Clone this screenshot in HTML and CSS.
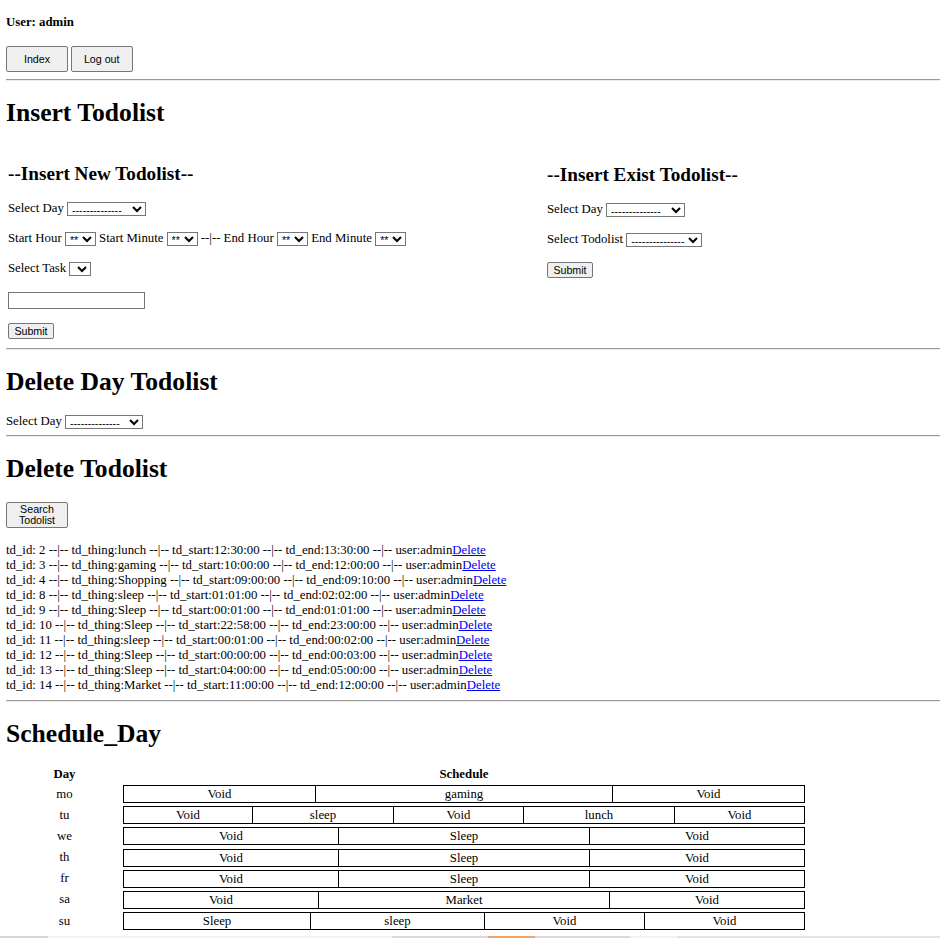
FILE: index.html
```html
<!DOCTYPE html>
<html>
<head>
<meta charset="utf-8">
<title>Todolist</title>
<link rel="stylesheet" href="styles.css">
</head>
<body>
<p class="user">User: admin</p>
<div class="nav"><button class="btn">Index</button> <button class="btn">Log out</button></div>
<hr class="rule rule-1">
<h1 class="title">Insert Todolist</h1>
<div class="cols">
  <form class="col">
    <h2 class="sub">--Insert New Todolist--</h2>
    <div class="row">Select Day <select class="sel sel-day"><option>--------------</option></select></div>
    <div class="row">Start Hour <select class="sel sel-sm"><option>**</option></select> Start Minute <select class="sel sel-sm"><option>**</option></select> --|-- End Hour <select class="sel sel-sm"><option>**</option></select> End Minute <select class="sel sel-sm"><option>**</option></select></div>
    <div class="row">Select Task <select class="sel sel-empty"></select></div>
    <div class="row row-input"><input class="txt" type="text"></div>
    <div class="row"><button class="sbtn" type="button">Submit</button></div>
  </form>
  <form class="col col-right">
    <h2 class="sub">--Insert Exist Todolist--</h2>
    <div class="row">Select Day <select class="sel sel-day"><option>--------------</option></select></div>
    <div class="row">Select Todolist <select class="sel sel-todo"><option>---------------</option></select></div>
    <div class="row"><button class="sbtn" type="button">Submit</button></div>
  </form>
</div>
<hr class="rule rule-2">
<h1 class="title">Delete Day Todolist</h1>
<div class="row row-del">Select Day <select class="sel sel-delday"><option>--------------</option></select></div>
<hr class="rule rule-3">
<h1 class="title">Delete Todolist</h1>
<button class="btn btn-search">Search<br>Todolist</button>
<div class="list">
  <div>td_id: 2 --|-- td_thing:lunch --|-- td_start:12:30:00 --|-- td_end:13:30:00 --|-- user:admin<a href="#">Delete</a></div>
  <div>td_id: 3 --|-- td_thing:gaming --|-- td_start:10:00:00 --|-- td_end:12:00:00 --|-- user:admin<a href="#">Delete</a></div>
  <div>td_id: 4 --|-- td_thing:Shopping --|-- td_start:09:00:00 --|-- td_end:09:10:00 --|-- user:admin<a href="#">Delete</a></div>
  <div>td_id: 8 --|-- td_thing:sleep --|-- td_start:01:01:00 --|-- td_end:02:02:00 --|-- user:admin<a href="#">Delete</a></div>
  <div>td_id: 9 --|-- td_thing:Sleep --|-- td_start:00:01:00 --|-- td_end:01:01:00 --|-- user:admin<a href="#">Delete</a></div>
  <div>td_id: 10 --|-- td_thing:Sleep --|-- td_start:22:58:00 --|-- td_end:23:00:00 --|-- user:admin<a href="#">Delete</a></div>
  <div>td_id: 11 --|-- td_thing:sleep --|-- td_start:00:01:00 --|-- td_end:00:02:00 --|-- user:admin<a href="#">Delete</a></div>
  <div>td_id: 12 --|-- td_thing:Sleep --|-- td_start:00:00:00 --|-- td_end:00:03:00 --|-- user:admin<a href="#">Delete</a></div>
  <div>td_id: 13 --|-- td_thing:Sleep --|-- td_start:04:00:00 --|-- td_end:05:00:00 --|-- user:admin<a href="#">Delete</a></div>
  <div>td_id: 14 --|-- td_thing:Market --|-- td_start:11:00:00 --|-- td_end:12:00:00 --|-- user:admin<a href="#">Delete</a></div>
</div>
<hr class="rule rule-4">
<h1 class="title">Schedule_Day</h1>
<table class="sched">
  <thead>
    <tr><th class="day">Day</th><th class="sch">Schedule</th></tr>
  </thead>
  <tbody>
    <tr><td class="day">mo</td><td class="sch"><div class="bar"><span class="seg" style="width:191px">Void</span><span class="seg" style="width:297px">gaming</span><span class="seg" style="width:192px">Void</span></div></td></tr>
    <tr><td class="day">tu</td><td class="sch"><div class="bar"><span class="seg" style="width:128px">Void</span><span class="seg" style="width:141px">sleep</span><span class="seg" style="width:130px">Void</span><span class="seg" style="width:151px">lunch</span><span class="seg" style="width:130px">Void</span></div></td></tr>
    <tr><td class="day">we</td><td class="sch"><div class="bar"><span class="seg" style="width:214px">Void</span><span class="seg" style="width:251px">Sleep</span><span class="seg" style="width:215px">Void</span></div></td></tr>
    <tr><td class="day">th</td><td class="sch"><div class="bar"><span class="seg" style="width:214px">Void</span><span class="seg" style="width:251px">Sleep</span><span class="seg" style="width:215px">Void</span></div></td></tr>
    <tr><td class="day">fr</td><td class="sch"><div class="bar"><span class="seg" style="width:214px">Void</span><span class="seg" style="width:251px">Sleep</span><span class="seg" style="width:215px">Void</span></div></td></tr>
    <tr><td class="day">sa</td><td class="sch"><div class="bar"><span class="seg" style="width:194px">Void</span><span class="seg" style="width:291px">Market</span><span class="seg" style="width:195px">Void</span></div></td></tr>
    <tr><td class="day">su</td><td class="sch"><div class="bar"><span class="seg" style="width:186px">Sleep</span><span class="seg" style="width:174px">sleep</span><span class="seg" style="width:160px">Void</span><span class="seg" style="width:160px">Void</span></div></td></tr>
  </tbody>
</table>
<div class="strip">
  <span class="s s1"></span><span class="s s2"></span><span class="s s3"></span><span class="s s4"></span><span class="s s5"></span><span class="s s6"></span><span class="s s7"></span>
</div>
</body>
</html>
```

FILE: styles.css
```css
html, body {
  background: #fff;
}
body {
  margin: 0;
  padding: 0 6px;
  font-family: "Liberation Serif", "Times New Roman", serif;
  font-size: 12.8px;
  color: #000;
}

.user {
  margin: 15px 0 0;
  font-weight: bold;
  line-height: 15px;
}

.nav {
  margin-top: 16px;
  height: 26px;
  font-size: 10.67px;
}

.btn {
  font-family: "Liberation Sans", Arial, sans-serif;
  font-size: 10.67px;
  line-height: 12px;
  width: 62px;
  height: 26px;
  padding: 0;
  background: #efefef;
  color: #000;
  border: 1px solid #767676;
  border-radius: 2px;
  vertical-align: top;
}

.rule {
  height: 0;
  border: 0;
  border-top: 1px solid #9a9a9a;
  border-bottom: 1px solid #ececec;
  margin: 0 -6px 0 0;
}
.rule-1 { margin-top: 7px; }
.rule-2 { margin-top: 9px; }
.rule-3 { margin-top: 5px; }
.rule-4 { margin-top: 7px; }

.title {
  margin: 17px 0 0;
  font-size: 25.6px;
  line-height: 30px;
  font-weight: bold;
}

.cols {
  display: grid;
  grid-template-columns: 539px 1fr;
  padding-left: 2px;
  margin-top: 35px;
}
.col {
  display: flex;
  flex-direction: column;
  gap: 13px;
  margin: 0;
}
.col-right {
  padding-top: 1px;
}
.sub {
  margin: 0 0 2px;
  font-size: 19.2px;
  line-height: 22px;
  font-weight: bold;
}

.row {
  height: 17px;
  line-height: 17px;
  white-space: nowrap;
}
.row-input {
  height: 19px;
  line-height: 19px;
}
.row-del {
  margin-top: 16px;
}

.sel {
  font-family: "Liberation Sans", Arial, sans-serif;
  font-size: 10.67px;
  height: 14px;
  padding: 0;
  margin: 0;
  border: 1px solid #767676;
  border-radius: 0;
  background: #fff;
  color: #000;
  vertical-align: middle;
  box-sizing: border-box;
}
.sel-day { width: 79px; }
.sel-delday { width: 78px; }
.sel-todo { width: 76px; }
.sel-sm { width: 31px; }
.sel-empty { width: 22px; }

.txt {
  width: 137px;
  height: 17px;
  box-sizing: border-box;
  border: 1px solid #767676;
  padding: 0 2px;
  margin: 0;
  vertical-align: middle;
  font-size: 10.67px;
}

.sbtn {
  font-family: "Liberation Sans", Arial, sans-serif;
  font-size: 10.67px;
  width: 46px;
  height: 16px;
  padding: 0;
  margin: 0;
  line-height: 14px;
  background: #efefef;
  color: #000;
  border: 1px solid #767676;
  border-radius: 2px;
  vertical-align: middle;
}

.btn-search {
  display: block;
  margin-top: 18px;
  line-height: 11.5px;
}

.list {
  margin-top: 15px;
  line-height: 15px;
  white-space: nowrap;
}
.list a {
  color: #0000ee;
  text-decoration: underline;
}

.sched {
  margin-top: 16px;
  border-collapse: collapse;
  border-spacing: 0;
}
.sched th {
  font-weight: bold;
  line-height: 15px;
  padding: 2px 0 1px;
  text-align: center;
}
.sched td {
  padding: 2px 0 1.2px;
  text-align: center;
}
.sched .day {
  width: 117px;
}
.sched .sch {
  width: 682px;
}
.bar {
  display: flex;
  width: 682px;
  box-sizing: border-box;
  border: 1px solid #000;
  line-height: 16px;
  height: 18px;
}
.seg {
  flex: none;
  box-sizing: border-box;
  text-align: center;
  border-left: 1px solid #000;
  overflow: hidden;
  white-space: nowrap;
}
.seg:first-child {
  border-left: 0;
}

.strip {
  display: flex;
  height: 6px;
  margin: 5px -6px 0;
  width: 940px;
}
.s { display: block; height: 100%; }
.s1 { width: 48px; background: #d6d6d6; }
.s2 { width: 344px; background: #f2f2f2; }
.s3 { width: 96px; background: #ddd8dc; }
.s4 { width: 47px; background: #f0a468; }
.s5 { width: 95px; background: #dcd8dc; }
.s6 { width: 47px; background: #f4f2f4; }
.s7 { flex: 1; background: #ecdcec; }
```
